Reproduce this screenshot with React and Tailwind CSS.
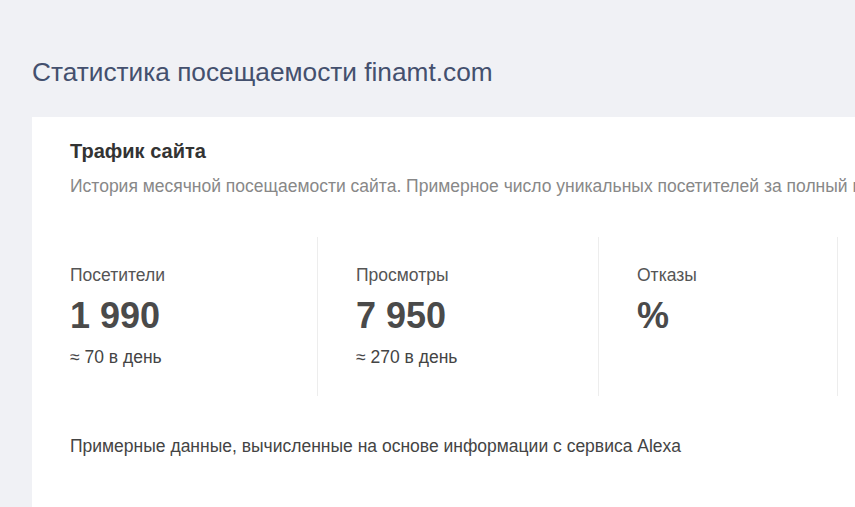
export default function App() {
  const font = { fontFamily: '"Liberation Sans", Arial, sans-serif' };
  return (
    <div className="min-h-[507px] w-[855px] overflow-hidden bg-[#f0f1f5] pt-[56px] pl-[32px]" style={font}>
      <h1 className="text-[26.25px] leading-[32px] text-[#44506e] mb-[29px] whitespace-nowrap">Статистика посещаемости finamt.com</h1>
      <div className="bg-white w-[900px] min-h-[400px] pt-[22px]">
        <div className="pl-[38px]">
          <h2 className="text-[20px] leading-[24px] font-bold text-[#333]">Трафик сайта</h2>
          <p className="mt-[11px] text-[17.5px] leading-[24px] text-[#888] whitespace-nowrap">История месячной посещаемости сайта. Примерное число уникальных посетителей за полный месяц</p>
        </div>
        <div className="flex mt-[39px]">
          <Stat w="w-[286px]" label="Посетители" value="1 990" sub="≈ 70 в день" border />
          <Stat w="w-[281px]" label="Просмотры" value="7 950" sub="≈ 270 в день" border />
          <Stat w="w-[239px]" label="Отказы" value="%" sub="" border />
          <Stat w="w-[200px]" label="" value="" sub="" />
        </div>
        <p className="pl-[38px] mt-[38px] text-[17.5px] leading-[24px] text-[#444] whitespace-nowrap">Примерные данные, вычисленные на основе информации с сервиса Alexa</p>
      </div>
    </div>
  );
}

function Stat({ w, label, value, sub, border }) {
  return (
    <div className={`${w} shrink-0 pl-[38px] pt-[26px] pb-[27px] ${border ? "border-r border-[#ededed]" : ""}`}>
      <div className="text-[17.5px] leading-[24px] text-[#555] h-[24px]">{label}</div>
      <div className="mt-[7px] text-[36px] leading-[44px] font-bold text-[#4a4a4a] h-[44px]">{value}</div>
      <div className="mt-[7px] text-[17.5px] leading-[24px] text-[#444] h-[24px]">{sub}</div>
    </div>
  );
}
